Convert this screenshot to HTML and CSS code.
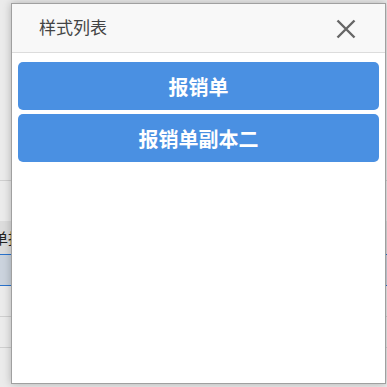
FILE: index.html
```html
<!DOCTYPE html>
<html lang="zh-CN">
<head>
    <meta charset="UTF-8">
    <meta name="viewport" content="width=device-width, initial-scale=1.0">
    <title>样式列表</title>
    <link rel="stylesheet" href="styles.css">
</head>
<body>
    <div class="page">
        <div class="row row-top"></div>
        <div class="row row-gap"></div>
        <div class="row row-head"><span class="cell">报销单报销单</span></div>
        <div class="row row-selected"></div>
        <div class="row row-line"></div>
        <div class="row row-line"></div>
    </div>

    <div class="modal">
        <div class="modal-header">
            <span class="modal-title">样式列表</span>
            <span class="modal-close">
                <svg width="20" height="20" viewBox="0 0 20 20">
                    <path d="M1.5 1.5 L18.5 18.5 M18.5 1.5 L1.5 18.5" stroke="#666" stroke-width="2.4" fill="none"/>
                </svg>
            </span>
        </div>
        <div class="modal-body">
            <button class="style-btn">报销单</button>
            <button class="style-btn">报销单副本二</button>
        </div>
    </div>
</body>
</html>
```

FILE: styles.css
```css
* {
    margin: 0;
    padding: 0;
    box-sizing: border-box;
}

body {
    font-family: "Noto Sans CJK SC", "Noto Sans", sans-serif;
    background-color: #ebebeb;
    color: #333;
    width: 387px;
    height: 387px;
    overflow: hidden;
}

.page {
    display: flex;
    flex-direction: column;
}

.row-top {
    height: 181px;
    border-bottom: 1px solid #cfcfcf;
}

.row-gap {
    height: 40px;
}

.row-head {
    height: 33px;
    background-color: #dcdcdc;
    display: flex;
    align-items: center;
}

.row-head .cell {
    margin-left: -37px;
    font-size: 15px;
    color: #222;
    white-space: nowrap;
}

.row-selected {
    height: 32px;
    background-color: #cbd3dd;
    border-top: 1px solid #2a73cc;
    border-bottom: 1px solid #2a73cc;
}

.row-line {
    height: 31px;
    border-bottom: 1px solid #cfcfcf;
}

.modal {
    position: absolute;
    left: 11px;
    top: 3px;
    width: 375px;
    height: 381px;
    background-color: white;
    border: 1px solid #a0a0a0;
    box-shadow: 0 0 8px rgba(0, 0, 0, 0.25);
    display: flex;
    flex-direction: column;
}

.modal-header {
    height: 49px;
    background-color: #f8f8f8;
    border-bottom: 1px solid #dcdcdc;
    display: flex;
    align-items: center;
    justify-content: space-between;
    padding: 0 29px 0 27px;
}

.modal-title {
    font-size: 17px;
    color: #444;
    margin-top: -4px;
}

.modal-close {
    display: flex;
    margin-top: 2px;
}

.modal-body {
    padding: 9px 6px;
    display: flex;
    flex-direction: column;
    gap: 4px;
}

.style-btn {
    height: 48px;
    width: 100%;
    border: none;
    border-radius: 5px;
    background-color: #4a90e2;
    color: white;
    font-family: "Noto Sans CJK SC", "Noto Sans", sans-serif;
    font-size: 20px;
    font-weight: bold;
}
```
